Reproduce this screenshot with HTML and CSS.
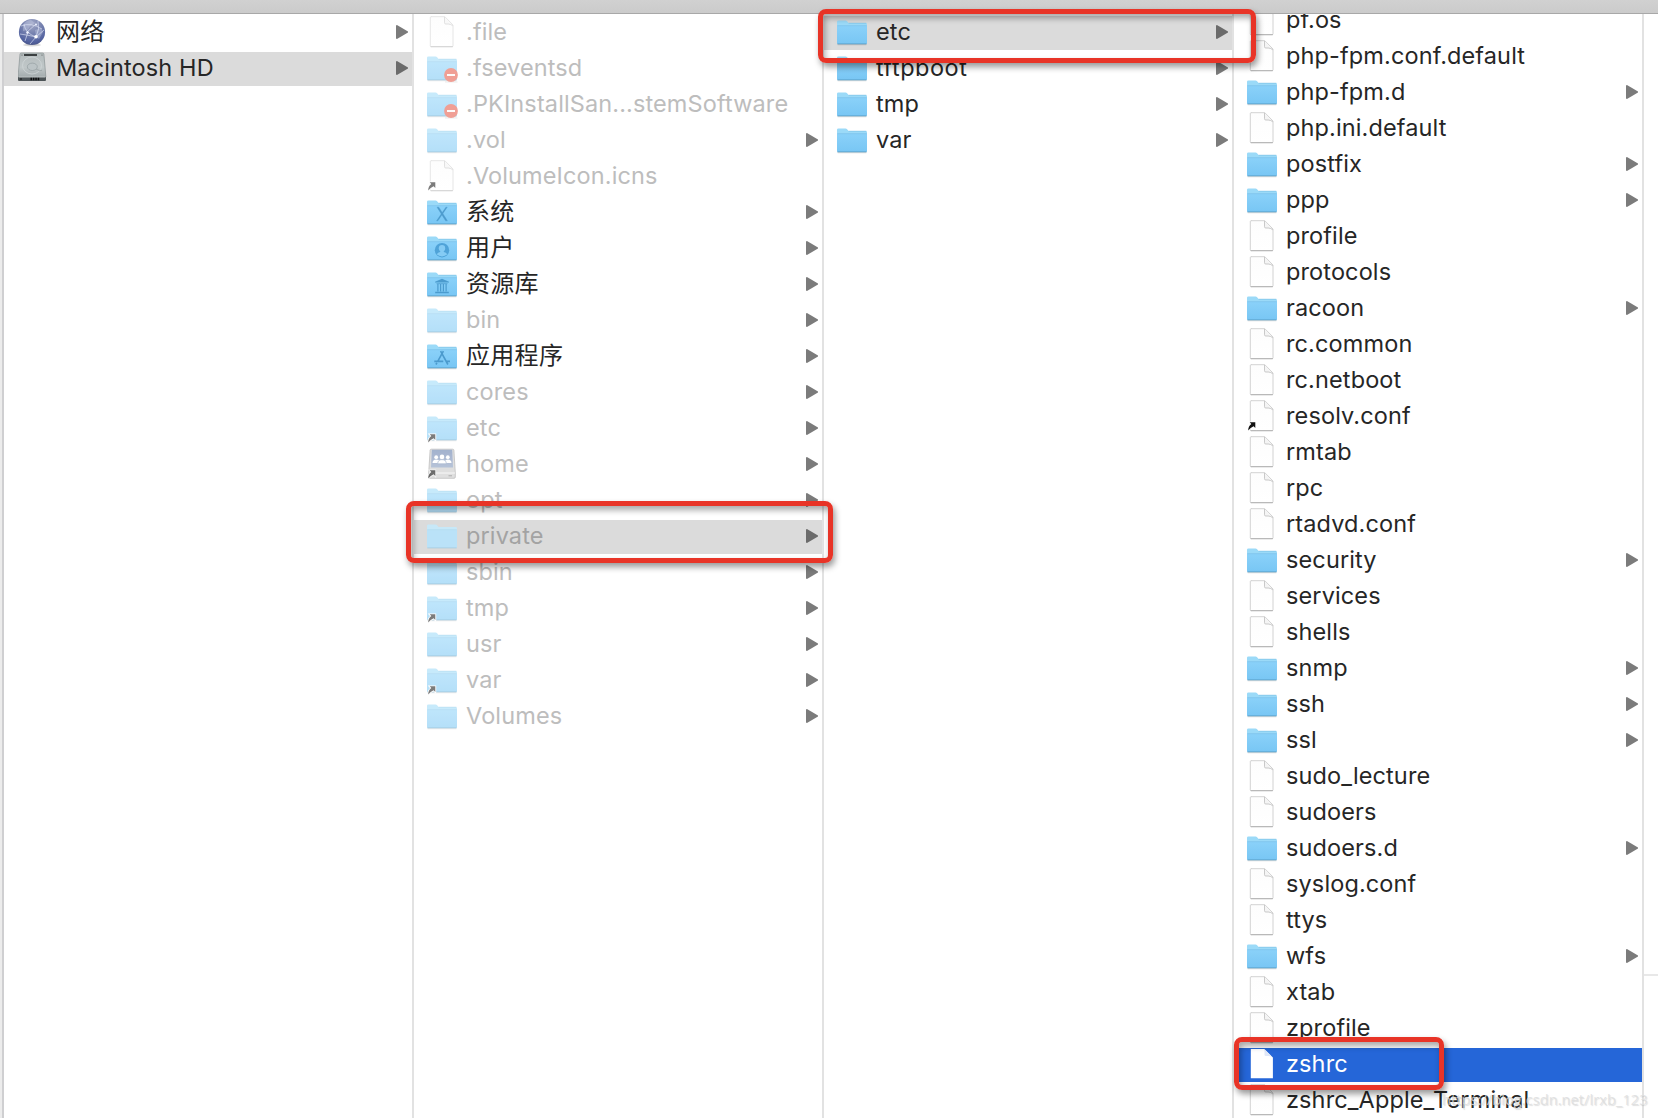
FILE: index.html
```html
<!DOCTYPE html>
<html lang="zh-CN">
<head>
<meta charset="utf-8">
<title>Macintosh HD</title>
<link rel="stylesheet" href="styles.css">
</head>
<body>
<svg class="defs" aria-hidden="true">
  <defs>
    <linearGradient id="folder-front" x1="0" y1="0" x2="0" y2="1"><stop offset="0" stop-color="#8ad1f9"/><stop offset="1" stop-color="#78c6f4"/></linearGradient>
    <linearGradient id="page-fill" x1="0" y1="0" x2="0" y2="1"><stop offset="0" stop-color="#fdfdfd"/><stop offset="1" stop-color="#fff"/></linearGradient>
    <radialGradient id="globe-fill" cx=".5" cy=".2" r=".85"><stop offset="0" stop-color="#a3a9c6"/><stop offset=".45" stop-color="#7480ae"/><stop offset=".8" stop-color="#5262a0"/><stop offset="1" stop-color="#46507c"/></radialGradient>
    <linearGradient id="disk-fill" x1="0" y1="0" x2="0" y2="1"><stop offset="0" stop-color="#b4bcbd"/><stop offset=".6" stop-color="#c0c7c8"/><stop offset="1" stop-color="#a3abad"/></linearGradient>
    <linearGradient id="share-fill" x1="0" y1="0" x2="0" y2="1"><stop offset="0" stop-color="#9eaecb"/><stop offset="1" stop-color="#b3c0d6"/></linearGradient>
  </defs>
  <symbol id="folder" viewBox="0 0 32 34">
    <path d="M1 5.800q0-1.300 1.400-1.300h7.200q.9 0 1.500.7l1.500 1.900h17q1.400 0 1.400 1.400V27H1z" fill="#9bdaf8"/>
    <path d="M1 9.800H31V27q0 1-1 1H2q-1 0-1-1z" fill="url(#folder-front)"/>
    <path d="M1.300 9.700H30.700" stroke="#7cc3ea" stroke-width=".8"/>
    <path d="M12.600 7.200H30.300" stroke="#79bde3" stroke-width=".6"/>
    <path d="M1.400 27.900H30.600" stroke="#5a9fc7" stroke-width=".9"/>
    <path d="M1.600 28.800H30.400" stroke="#000" stroke-opacity=".14" stroke-width=".9"/>
  </symbol>
  <symbol id="folder-pale" viewBox="0 0 32 34">
    <path d="M1 5.800q0-1.300 1.400-1.300h7.200q.9 0 1.500.7l1.500 1.900h17q1.400 0 1.400 1.400V27H1z" fill="#c6e9fa"/>
    <path d="M1 9.800H31V27q0 1-1 1H2q-1 0-1-1z" fill="#b9e3fa"/>
    <path d="M1.300 9.700H30.700" stroke="#b2dcf3" stroke-width=".8"/>
    <path d="M1.400 27.900H30.600" stroke="#a5cce0" stroke-width=".9"/>
  </symbol>
  <symbol id="file" viewBox="0 0 32 34">
    <path d="M5 .7h13.800l8.200 8.300V29.800q0 .9-.9.900H5.200q-.9 0-.9-.9V1.600q0-.9.900-.9z" fill="url(#page-fill)" stroke="#c6c6c6" stroke-width=".8"/>
    <path d="M18.500 1v5.700q0 1.300 1.300 1.300h2.400q2.800.1 4.600 1.800" fill="#f4f4f4" stroke="#bdbdbd" stroke-width=".8"/>
    <path d="M4.700 30.700h22.200" stroke="#a6a6a6" stroke-width=".8"/>
  </symbol>
  <symbol id="file-selected" viewBox="0 0 32 34">
    <path d="M4.800 1h13.500l8.600 8.500V30.200H4.800z" fill="#fff"/>
    <path d="M18.500 1.200v5.500q0 1.300 1.300 1.300h2.400q2.800.1 4.500 1.500z" fill="#dfe7f8"/>
  </symbol>
  <symbol id="alias" viewBox="0 0 32 34">
    <path d="M2.200 30.500q0-4 3.100-6.400L3.700 22.300H9.300V28L7.600 26.300Q4.500 27.800 2.200 30.500z" fill="#111" stroke="#fff" stroke-width="1.800" paint-order="stroke"/>
  </symbol>
  <symbol id="denied" viewBox="0 0 32 34">
    <path d="M19 30h12.500" stroke="#000" stroke-opacity=".1" stroke-width="1.400"/>
    <circle cx="25" cy="23" r="6.900" fill="#e4513f"/><path d="M21 23h8" stroke="#fff" stroke-width="1.900"/>
  </symbol>
  <symbol id="mark-system" viewBox="0 0 32 34"><path d="M11 11.200h1.800l8.600 13.600h-1.800zM19.900 11.200h1.300l-9.300 13.600h-1.300z" fill="#4d9bcd" stroke="#4d9bcd" stroke-width=".4"/></symbol>
  <symbol id="mark-users" viewBox="0 0 32 34">
    <circle cx="16" cy="18.200" r="7.200" fill="#4fa3d8"/><circle cx="16" cy="16.200" r="3.200" fill="#84cbf4"/><path d="M10.800 22.300q1-1.700 3.300-2.300l.5-2h2.800l.5 2q2.300.6 3.300 2.300q-2.200 2.100-5.200 2.100t-5.200-2.100z" fill="#84cbf4"/>
  </symbol>
  <symbol id="mark-library" viewBox="0 0 32 34">
    <path d="M9 14.500v-.8L16 10.700l7 3v.8zM9.200 23.700h13.600v1.600H9.200z" fill="#4b9bce"/><path d="M10.500 15.700h11" stroke="#4b9bce" stroke-width=".8"/><path d="M11.900 16v7.500M14.600 16v7.500M17.400 16v7.500M20.100 16v7.500" stroke="#4b9bce" stroke-width="1.200"/>
  </symbol>
  <symbol id="mark-apps" viewBox="0 0 32 34">
    <path d="M14.600 11.200l7.300 13.300M17.400 11.200l-5.400 9.700M10.900 22.800l-1 1.700M8.300 21.400h9M20.400 21.400h3.600" fill="none" stroke="#4b9acd" stroke-width="1.600"/>
  </symbol>
  <symbol id="globe" viewBox="0 0 32 34">
    <ellipse cx="14" cy="29" rx="9" ry="1.500" fill="#000" opacity=".15"/>
    <circle cx="14" cy="16" r="13.100" fill="url(#globe-fill)"/>
    <path d="M5 9q3-5 8-5l4 3-5 3-2 4-5 1zM17 14l6-2 2 4-4 7-3-2z" fill="#c6cde6" opacity=".4"/>
    <path d="M3 10q10-4 21 3M6 8q1 9 12 13M20 5q2 8-2 16M18 21l8-7M2 18q8 1 16 3M9 16l9-8M12 28l6-7M7 25l3-9" fill="none" stroke="#e6ebfb" stroke-opacity=".75" stroke-width=".8"/>
    <circle cx="18" cy="20.800" r="1.800" fill="#fff"/><circle cx="9.500" cy="16.500" r="1.300" fill="#f0f3ff"/><circle cx="18" cy="8.500" r="1" fill="#f0f3ff"/>
  </symbol>
  <symbol id="disk" viewBox="0 0 32 34">
    <path d="M3.300 1h21.400q1 0 1.200 1l2 23H0L2 2q.2-1 1.300-1z" fill="url(#disk-fill)" stroke="#7f898b" stroke-width=".6"/>
    <path d="M0 25h28v3q0 1-1 1H1q-1 0-1-1z" fill="#4c5356"/><path d="M.6 25h26.800" stroke="#d6dadb" stroke-width=".8"/>
    <path d="M6 3h13" stroke="#35393a" stroke-width="1.900"/>
    <ellipse cx="14" cy="13.500" rx="9.500" ry="8.500" fill="none" stroke="#d3d9da" stroke-width=".7"/>
    <ellipse cx="14.300" cy="14.800" rx="5" ry="3.700" fill="#bcc4c6" stroke="#98a2a4" stroke-width=".8"/>
    <path d="M18 17q3 2 6 1.500" fill="none" stroke="#8e989a" stroke-width=".6"/>
    <path d="M12.500 27h9" stroke="#0d0d0d" stroke-width="2.400" stroke-dasharray="1.500 .9"/><circle cx="3" cy="27" r=".8" fill="#111"/>
    <circle cx="4" cy="3" r=".6" fill="#555"/><circle cx="24" cy="3" r=".6" fill="#555"/>
  </symbol>
  <symbol id="share" viewBox="0 0 32 34">
    <path d="M5.200 1.200h21.600q1 0 1.100 1L29.300 25v4q0 1.300-1.300 1.300H4q-1.300 0-1.300-1.300V25L4.100 2.200q.1-1 1.100-1z" fill="#dedede" stroke="#bebebe" stroke-width=".8"/>
    <path d="M5.800 1.700h20.400l.8 17.800H5z" fill="url(#share-fill)"/>
    <g fill="#fff"><circle cx="10.200" cy="9.200" r="1.900"/><circle cx="21.800" cy="9.200" r="1.900"/><path d="M6.500 15q0-3.600 3.700-3.600T13 13v2zM19 15v-2q.6-1.600 2.800-1.600 3.700 0 3.700 3.600z"/><circle cx="16" cy="8.900" r="2.300"/><path d="M11.700 15.800q0-4.200 4.300-4.200t4.300 4.200z" stroke="#a9b7cf" stroke-width=".7"/></g>
    <path d="M3 25h26" stroke="#f7f7f7"/><path d="M22.500 27.800h3.500" stroke="#aaa"/>
  </symbol>
</svg>

<div class="toolbar"></div>
<main class="browser">
  <ul class="column">
    <li class="row go"><svg class="icon"><use href="#globe"/></svg><span class="name zh">网络</span></li>
    <li class="row go current"><svg class="icon"><use href="#disk"/></svg><span class="name">Macintosh HD</span></li>
  </ul>
  <ul class="column">
    <li class="row dim"><svg class="icon"><use href="#file"/></svg><span class="name">.file</span></li>
    <li class="row dim"><svg class="icon"><use href="#folder"/><use href="#denied"/></svg><span class="name">.fseventsd</span></li>
    <li class="row dim"><svg class="icon"><use href="#folder"/><use href="#denied"/></svg><span class="name">.PKInstallSan...stemSoftware</span></li>
    <li class="row go dim"><svg class="icon"><use href="#folder"/></svg><span class="name">.vol</span></li>
    <li class="row dim"><svg class="icon"><use href="#file"/><use href="#alias"/></svg><span class="name">.VolumeIcon.icns</span></li>
    <li class="row go"><svg class="icon"><use href="#folder"/><use href="#mark-system"/></svg><span class="name zh">系统</span></li>
    <li class="row go"><svg class="icon"><use href="#folder"/><use href="#mark-users"/></svg><span class="name zh">用户</span></li>
    <li class="row go"><svg class="icon"><use href="#folder"/><use href="#mark-library"/></svg><span class="name zh">资源库</span></li>
    <li class="row go dim"><svg class="icon"><use href="#folder"/></svg><span class="name">bin</span></li>
    <li class="row go"><svg class="icon"><use href="#folder"/><use href="#mark-apps"/></svg><span class="name zh">应用程序</span></li>
    <li class="row go dim"><svg class="icon"><use href="#folder"/></svg><span class="name">cores</span></li>
    <li class="row go dim"><svg class="icon"><use href="#folder"/><use href="#alias"/></svg><span class="name">etc</span></li>
    <li class="row go dim"><svg class="icon solid"><use href="#share"/><use href="#alias" opacity=".6"/></svg><span class="name">home</span></li>
    <li class="row go dim"><svg class="icon"><use href="#folder"/></svg><span class="name">opt</span></li>
    <li class="row go dim current"><svg class="icon solid"><use href="#folder-pale"/></svg><span class="name">private</span></li>
    <li class="row go dim"><svg class="icon"><use href="#folder"/></svg><span class="name">sbin</span></li>
    <li class="row go dim"><svg class="icon"><use href="#folder"/><use href="#alias"/></svg><span class="name">tmp</span></li>
    <li class="row go dim"><svg class="icon"><use href="#folder"/></svg><span class="name">usr</span></li>
    <li class="row go dim"><svg class="icon"><use href="#folder"/><use href="#alias"/></svg><span class="name">var</span></li>
    <li class="row go dim"><svg class="icon"><use href="#folder"/></svg><span class="name">Volumes</span></li>
  </ul>
  <ul class="column">
    <li class="row go current"><svg class="icon"><use href="#folder"/></svg><span class="name">etc</span></li>
    <li class="row go"><svg class="icon"><use href="#folder"/></svg><span class="name wide">tftpboot</span></li>
    <li class="row go"><svg class="icon"><use href="#folder"/></svg><span class="name">tmp</span></li>
    <li class="row go"><svg class="icon"><use href="#folder"/></svg><span class="name">var</span></li>
  </ul>
  <ul class="column scrolled">
    <li class="row"><svg class="icon"><use href="#file"/></svg><span class="name">pf.os</span></li>
    <li class="row"><svg class="icon"><use href="#file"/></svg><span class="name">php-fpm.conf.default</span></li>
    <li class="row go"><svg class="icon"><use href="#folder"/></svg><span class="name">php-fpm.d</span></li>
    <li class="row"><svg class="icon"><use href="#file"/></svg><span class="name">php.ini.default</span></li>
    <li class="row go"><svg class="icon"><use href="#folder"/></svg><span class="name">postfix</span></li>
    <li class="row go"><svg class="icon"><use href="#folder"/></svg><span class="name">ppp</span></li>
    <li class="row"><svg class="icon"><use href="#file"/></svg><span class="name">profile</span></li>
    <li class="row"><svg class="icon"><use href="#file"/></svg><span class="name">protocols</span></li>
    <li class="row go"><svg class="icon"><use href="#folder"/></svg><span class="name">racoon</span></li>
    <li class="row"><svg class="icon"><use href="#file"/></svg><span class="name">rc.common</span></li>
    <li class="row"><svg class="icon"><use href="#file"/></svg><span class="name">rc.netboot</span></li>
    <li class="row"><svg class="icon"><use href="#file"/><use href="#alias"/></svg><span class="name">resolv.conf</span></li>
    <li class="row"><svg class="icon"><use href="#file"/></svg><span class="name">rmtab</span></li>
    <li class="row"><svg class="icon"><use href="#file"/></svg><span class="name">rpc</span></li>
    <li class="row"><svg class="icon"><use href="#file"/></svg><span class="name">rtadvd.conf</span></li>
    <li class="row go"><svg class="icon"><use href="#folder"/></svg><span class="name">security</span></li>
    <li class="row"><svg class="icon"><use href="#file"/></svg><span class="name">services</span></li>
    <li class="row"><svg class="icon"><use href="#file"/></svg><span class="name">shells</span></li>
    <li class="row go"><svg class="icon"><use href="#folder"/></svg><span class="name">snmp</span></li>
    <li class="row go"><svg class="icon"><use href="#folder"/></svg><span class="name">ssh</span></li>
    <li class="row go"><svg class="icon"><use href="#folder"/></svg><span class="name">ssl</span></li>
    <li class="row"><svg class="icon"><use href="#file"/></svg><span class="name">sudo_lecture</span></li>
    <li class="row"><svg class="icon"><use href="#file"/></svg><span class="name">sudoers</span></li>
    <li class="row go"><svg class="icon"><use href="#folder"/></svg><span class="name">sudoers.d</span></li>
    <li class="row"><svg class="icon"><use href="#file"/></svg><span class="name">syslog.conf</span></li>
    <li class="row"><svg class="icon"><use href="#file"/></svg><span class="name">ttys</span></li>
    <li class="row go"><svg class="icon"><use href="#folder"/></svg><span class="name">wfs</span></li>
    <li class="row"><svg class="icon"><use href="#file"/></svg><span class="name">xtab</span></li>
    <li class="row"><svg class="icon"><use href="#file"/></svg><span class="name">zprofile</span></li>
    <li class="row active"><svg class="icon"><use href="#file-selected"/></svg><span class="name">zshrc</span></li>
    <li class="row"><svg class="icon"><use href="#file"/></svg><span class="name">zshrc_Apple_Terminal</span></li>
  </ul>
  <div class="preview"><div class="preview-image"></div></div>
</main>
<div class="callout callout-etc"></div>
<div class="callout callout-private"></div>
<div class="callout callout-zshrc"></div>
<div class="watermark">https://blog.csdn.net/lrxb_123</div>
</body>
</html>
```

FILE: styles.css
```css
* { box-sizing: border-box; }

body {
  position: relative;
  display: flex;
  flex-direction: column;
  width: 1658px;
  height: 1118px;
  margin: 0;
  overflow: hidden;
  background: #fff;
  color: #262626;
  font-family: Inter, "Noto Sans CJK SC", sans-serif;
  font-size: 23.5px;
  letter-spacing: .12px;
}

.defs { position: absolute; width: 0; height: 0; }

.toolbar {
  flex: none;
  height: 14px;
  background: linear-gradient(#d1d1d1, #cbcbcb);
  border-bottom: 1px solid #a8a8a8;
}

.browser {
  display: flex;
  flex: 1;
  min-height: 0;
  border-left: 2px solid #ececec;
  box-shadow: inset 2px 0 #cfcfd1;
  padding-left: 2px;
}

.column {
  display: flex;
  flex: none;
  flex-direction: column;
  gap: 2px;
  width: 410px;
  margin: 0;
  padding: 2px 0 0;
  overflow: hidden;
  list-style: none;
  border-right: 2px solid #e2e2e2;
}

.scrolled > :first-child { margin-top: -12px; }

.row {
  display: flex;
  flex: none;
  align-items: center;
  height: 34px;
  padding: 0 4px 0 12px;
}

.icon { flex: none; width: 32px; height: 34px; }
.column:first-child .icon { margin: 0 -2px 0 2px; }

.name {
  flex: 1;
  margin-left: 8px;
  line-height: 34px;
  padding-bottom: 2px;
  white-space: nowrap;
}

.zh { font-size: 24px; letter-spacing: .3px; }
.wide { letter-spacing: .5px; }

.go::after {
  content: "";
  width: 12px;
  height: 14px;
  margin-bottom: 2px;
  background: #7b7b7b;
  clip-path: polygon(0 4%, 8% 0, 100% 46%, 100% 54%, 8% 100%, 0 96%);
}

.dim .icon { opacity: .55; }
.dim .solid { opacity: .95; }
.dim .name { color: #bdbdbd; }

.current { background: #dbdbdb; }
.current::after { background: #6b6b6b; }
.current.dim .name { color: #a3a3a3; }

.active { background: #2566d8; }
.active .name { color: #fff; }

.preview { display: flex; flex: 1; }
.preview-image { flex: 1; height: 962px; border-bottom: 2px solid #e8e8e8; }

.callout {
  position: absolute;
  border: 5.500px solid #e83427;
  border-radius: 8px;
  box-shadow: 2px 4px 6px rgba(0, 0, 0, .4), inset 2px 4px 6px rgba(0, 0, 0, .35);
}

.callout-etc { left: 818px; top: 9px; width: 438px; height: 54px; }
.callout-private { left: 406px; top: 501px; width: 427px; height: 62px; }
.callout-zshrc { left: 1234px; top: 1037px; width: 210px; height: 53px; }

.watermark {
  position: absolute;
  left: 1442px;
  top: 1088px;
  color: rgba(222, 222, 222, .85);
  font-family: "Open Sans", sans-serif;
  font-size: 14.500px;
  letter-spacing: .1px;
  line-height: 24px;
  text-shadow: 1px 1px 1px rgba(150, 150, 150, .3);
  white-space: nowrap;
}
```
